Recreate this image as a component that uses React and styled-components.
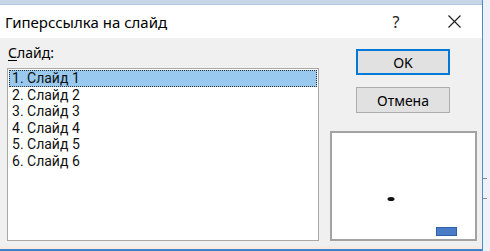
import React from "react";
import styled, { createGlobalStyle } from "styled-components";

const Global = createGlobalStyle`
  html, body { margin: 0; padding: 0; }
  body { background: #eef1f5; font-family: "Noto Sans", "Open Sans", sans-serif; }
`;

const Screen = styled.div`
  width: 490px;
  height: 251px;
  display: flex;
  overflow: hidden;
  background: #eef1f5;
`;

const Window = styled.div`
  width: 483px;
  height: 251px;
  display: flex;
  flex-direction: column;
  border-right: 1px solid #4a8bd0;
  box-sizing: border-box;
`;

const TopStrip = styled.div`
  height: 4px;
  background: #c7d6e7;
  border-bottom: 1px solid #b3c8df;
`;

const TitleBar = styled.div`
  height: 33px;
  background: #ffffff;
  display: flex;
  align-items: center;
  padding-left: 5px;
  font-size: 15px;
  color: #000;
`;

const Title = styled.span`
  flex: 1;
`;

const TitleButton = styled.span`
  width: ${(p) => p.$w}px;
  margin-right: ${(p) => p.$mr || 0}px;
  display: flex;
  justify-content: center;
  align-items: center;
  font-size: 16px;
  color: #222;
`;

const Body = styled.div`
  flex: 1;
  background: #f0f0f0;
  display: grid;
  grid-template-columns: 312px 147px;
  column-gap: 11px;
  padding: 7px 0 0 7px;
  border-bottom: 3px solid #f6ebe3;
`;

const BottomLine = styled.div`
  height: 2px;
  background: #3d82cc;
`;

const LeftCol = styled.div`
  display: flex;
  flex-direction: column;
`;

const Label = styled.div`
  height: 16px;
  line-height: 16px;
  margin: 0 0 7px 1px;
  font-size: 14px;
  color: #000;
  u { text-decoration: underline; text-underline-offset: 2px; }
`;

const ListBox = styled.div`
  height: 173px;
  box-sizing: border-box;
  border: 1px solid #a8a8a8;
  background: #fff;
  padding: 1px;
`;

const Row = styled.div`
  height: 16.6px;
  line-height: 16.6px;
  padding-left: 3px;
  font-family: Roboto, "Noto Sans", sans-serif;
  font-size: 14px;
  color: #111;
  box-sizing: border-box;
  background: ${(p) => (p.$selected ? "#99c9ef" : "transparent")};
  outline: ${(p) => (p.$selected ? "1px dotted #333" : "none")};
  outline-offset: -1px;
`;

const RightCol = styled.div`
  display: flex;
  flex-direction: column;
  padding-top: 4px;
`;

const Button = styled.button`
  width: 94px;
  height: 26px;
  margin-left: 26px;
  margin-bottom: ${(p) => p.$mb}px;
  box-sizing: border-box;
  background: #e1e1e1;
  border: ${(p) => (p.$default ? "2px solid #0078d7" : "1px solid #adadad")};
  font-family: "Noto Sans", "Open Sans", sans-serif;
  font-size: 14px;
  color: #000;
  padding: 0;
  display: flex;
  align-items: center;
  justify-content: center;
`;

const Preview = styled.div`
  width: 147px;
  height: 110px;
  box-sizing: border-box;
  border: 2px solid #a3a3a3;
  background: #fff;
  display: flex;
`;

const Side = styled.div`
  flex: 1;
  display: flex;
  flex-direction: column;
  padding-top: 178px;
  gap: 19px;
`;

const Tick = styled.div`
  height: 1px;
  width: 4px;
  background: #8a8a8a;
`;

const slides = [1, 2, 3, 4, 5, 6];

export default function App() {
  return (
    <>
      <Global />
      <Screen>
        <Window>
          <TopStrip />
          <TitleBar>
            <Title>Гиперссылка на слайд</Title>
            <TitleButton $w={20} $mr={30}>?</TitleButton>
            <TitleButton $w={36} $mr={10}>
              <svg width="13" height="13" viewBox="0 0 13 13">
                <path d="M0.5 0.5 L12.5 12.5 M12.5 0.5 L0.5 12.5" stroke="#222" strokeWidth="1.2" fill="none" />
              </svg>
            </TitleButton>
          </TitleBar>
          <Body>
            <LeftCol>
              <Label>
                <u>С</u>лайд:
              </Label>
              <ListBox>
                {slides.map((n) => (
                  <Row key={n} $selected={n === 1}>
                    {n}. Слайд {n}
                  </Row>
                ))}
              </ListBox>
            </LeftCol>
            <RightCol>
              <Button $default $mb={12}>OK</Button>
              <Button $mb={18}>Отмена</Button>
              <Preview>
                <svg width="143" height="106" viewBox="0 0 143 106">
                  <ellipse cx="59" cy="66" rx="3.5" ry="2" fill="#111" />
                  <rect x="104.5" y="94.5" width="20" height="8" fill="#4a7cc8" stroke="#2f5fa8" strokeWidth="1" />
                </svg>
              </Preview>
            </RightCol>
          </Body>
          <BottomLine />
        </Window>
        <Side>
          <Tick />
          <Tick />
        </Side>
      </Screen>
    </>
  );
}
